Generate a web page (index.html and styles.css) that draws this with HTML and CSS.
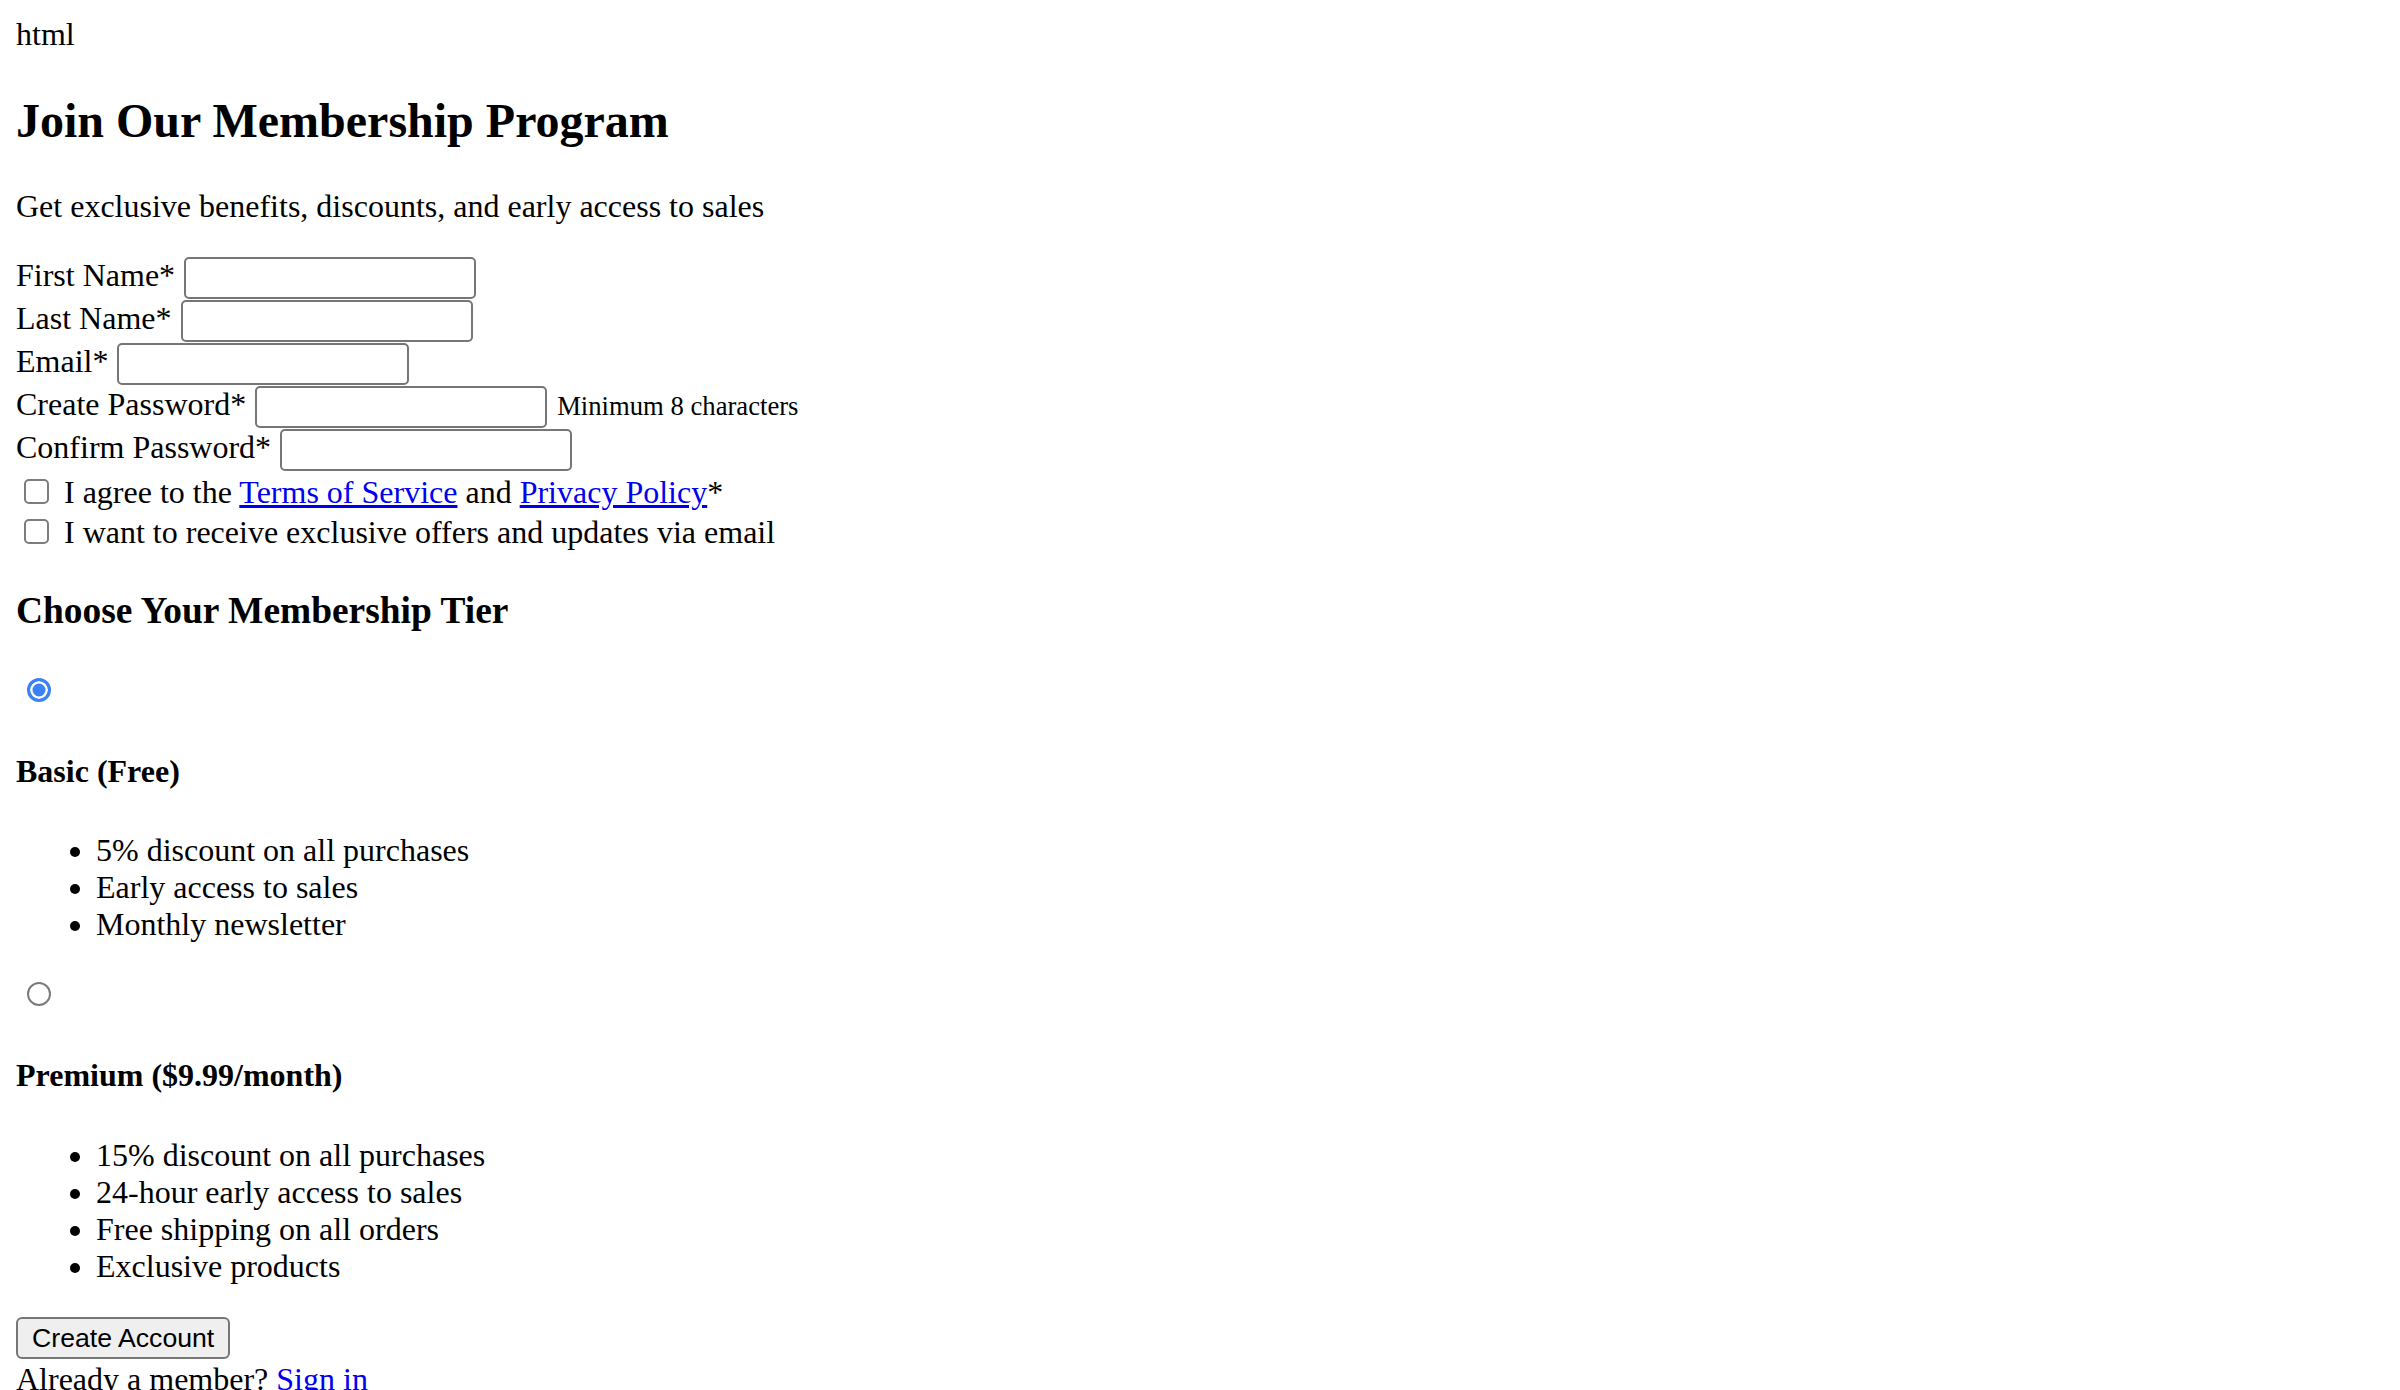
FILE: index.html
```html
<!DOCTYPE html>
<html lang="en">
<head>
<meta charset="utf-8">
<title>Join Our Membership Program</title>
<link rel="stylesheet" href="styles.css">
</head>
<body>
<div class="stray">html</div>
<section class="signup">
  <h1 class="title">Join Our Membership Program</h1>
  <p class="lead">Get exclusive benefits, discounts, and early access to sales</p>
  <form class="form">
    <div class="field"><label class="field-label" for="first">First Name*</label><input class="text-input" id="first" type="text"></div>
    <div class="field"><label class="field-label" for="last">Last Name*</label><input class="text-input" id="last" type="text"></div>
    <div class="field"><label class="field-label" for="email">Email*</label><input class="text-input" id="email" type="email"></div>
    <div class="field"><label class="field-label" for="pw">Create Password*</label><input class="text-input" id="pw" type="password"><span class="hint">Minimum 8 characters</span></div>
    <div class="field"><label class="field-label" for="pw2">Confirm Password*</label><input class="text-input" id="pw2" type="password"></div>
    <div class="check-row"><input class="checkbox" id="terms" type="checkbox"><label class="check-label" for="terms">I agree to the <a class="link" href="#">Terms of Service</a> and <a class="link" href="#">Privacy Policy</a>*</label></div>
    <div class="check-row"><input class="checkbox" id="offers" type="checkbox"><label class="check-label" for="offers">I want to receive exclusive offers and updates via email</label></div>

    <h3 class="tier-heading">Choose Your Membership Tier</h3>

    <div class="tier">
      <div class="tier-radio"><input class="radio" type="radio" name="tier" checked></div>
      <h4 class="tier-name">Basic (Free)</h4>
      <ul class="perks">
        <li>5% discount on all purchases</li>
        <li>Early access to sales</li>
        <li>Monthly newsletter</li>
      </ul>
    </div>

    <div class="tier">
      <div class="tier-radio"><input class="radio" type="radio" name="tier"></div>
      <h4 class="tier-name">Premium ($9.99/month)</h4>
      <ul class="perks">
        <li>15% discount on all purchases</li>
        <li>24-hour early access to sales</li>
        <li>Free shipping on all orders</li>
        <li>Exclusive products</li>
      </ul>
    </div>

    <div class="submit-row"><button class="submit" type="button">Create Account</button></div>
    <div class="signin">Already a member? <a class="link" href="#">Sign in</a></div>
  </form>
</section>
</body>
</html>
```

FILE: styles.css
```css
html {
  background: #ffffff;
}

body {
  margin: 16px;
  font-family: "Liberation Serif", "Times New Roman", serif;
  font-size: 32px;
  line-height: normal;
  color: #000000;
}

.stray {
  line-height: normal;
}

.title {
  font-size: 48px;
  font-weight: bold;
  margin: 39.84px 0;
}

.lead {
  margin: 32px 0;
}

.form {
  margin: 0;
}

.field {
  display: flex;
  align-items: flex-start;
  height: 43px;
}

.field-label {
  line-height: 36.8px;
  margin-right: 9px;
}

.text-input {
  box-sizing: border-box;
  width: 292px;
  height: 42px;
  margin: 0;
  padding: 0 4px;
  border: 2px solid #767676;
  border-radius: 5px;
  background: #ffffff;
  font-family: "Liberation Sans", Arial, sans-serif;
  font-size: 26.67px;
}

.hint {
  font-size: 26.67px;
  margin-left: 10px;
  padding-top: 5px;
  line-height: 30.6px;
}

.check-row {
  display: flex;
  align-items: flex-start;
  height: 40px;
}

.checkbox {
  appearance: none;
  -webkit-appearance: none;
  box-sizing: border-box;
  width: 25px;
  height: 25px;
  margin: 7px 15px 0 8px;
  border: 2px solid #7d7d7d;
  border-radius: 5px;
  background: #ffffff;
  flex: none;
}

.check-label {
  line-height: 36.8px;
  padding-top: 2px;
}

.link {
  color: #0000ee;
  text-decoration: underline;
}

.tier-heading {
  font-size: 37.44px;
  font-weight: bold;
  margin: 37.44px 0;
}

.tier-radio {
  box-sizing: border-box;
  height: 40.7px;
  padding-top: 8px;
}

.radio {
  appearance: none;
  -webkit-appearance: none;
  box-sizing: border-box;
  display: block;
  width: 24px;
  height: 24px;
  margin: 0 0 0 11px;
  border: 2px solid #7b7b7b;
  border-radius: 50%;
  background: #ffffff;
}

.radio:checked {
  border: 3px solid #3b82f6;
  background: #3b82f6;
  box-shadow: inset 0 0 0 2.5px #ffffff;
}

.tier-name {
  font-size: 32px;
  font-weight: bold;
  margin: 42.56px 0;
}

.perks {
  margin: 32px 0 30.5px;
  padding-left: 80px;
}

.submit-row {
  padding: 2px 0;
}

.submit {
  box-sizing: border-box;
  display: block;
  height: 42px;
  margin: 0;
  padding: 0 14px;
  border: 2px solid #767676;
  border-radius: 6px;
  background: #efefef;
  color: #000000;
  font-family: "Liberation Sans", Arial, sans-serif;
  font-size: 26.67px;
}

.signin {
  line-height: normal;
}
```
